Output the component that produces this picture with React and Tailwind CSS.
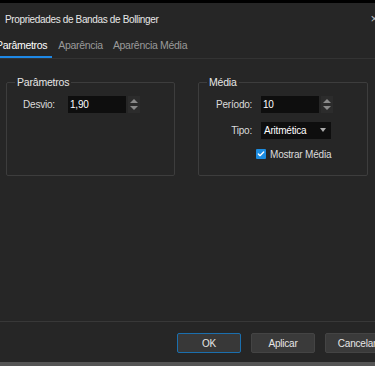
import { Check } from 'lucide-react'

function Spinner() {
  return (
    <div className="flex flex-col items-center justify-center gap-[3px] w-[12px] h-[17px] bg-[#2c2c2c]">
      <div className="w-0 h-0 border-l-[4px] border-r-[4px] border-b-[4px] border-l-transparent border-r-transparent border-b-[#8a8a8a]" />
      <div className="w-0 h-0 border-l-[4px] border-r-[4px] border-t-[4px] border-l-transparent border-r-transparent border-t-[#8a8a8a]" />
    </div>
  )
}

function GroupBox({ title, className, children }) {
  return (
    <fieldset className={`border border-[#3d3d3d] rounded-[2px] px-0 pb-0 ${className}`}>
      <legend className="ml-[8px] px-[2px] text-[#e6e6e6] text-[10.5px]">{title}</legend>
      {children}
    </fieldset>
  )
}

export default function App() {
  return (
    <div
      className="w-[375px] h-[366px] bg-[#262626] text-[#dcdcdc] text-[10px] tracking-[-0.2px] flex flex-col overflow-hidden"
      style={{ fontFamily: '"Liberation Sans", Arial, sans-serif' }}
    >
      <div className="h-[3px] bg-black shrink-0" />
      {/* title bar */}
      <div className="h-[32px] flex items-center justify-between pl-[5px] shrink-0">
        <span className="text-[#e8e8e8] tracking-[-0.35px]">Propriedades de Bandas de Bollinger</span>
        <span className="text-[#bdbdbd] text-[13px] -mr-[3px]">×</span>
      </div>

      {/* tabs */}
      <div className="h-[24px] flex items-end border-b border-[#333] shrink-0 text-[10.5px] tracking-[-0.3px]">
        <div className="-ml-[5px] pl-[1px] pr-[5px] pb-[2px] border-b-2 border-[#1e88e5] text-white">Parâmetros</div>
        <div className="ml-[6px] pb-[4px] text-[#9a9a9a]">Aparência</div>
        <div className="ml-[10px] pb-[4px] text-[#9a9a9a]">Aparência Média</div>
      </div>

      {/* content */}
      <div className="flex-1 flex gap-[23px] px-[6px] pt-[16px]">
        <GroupBox title="Parâmetros" className="w-[169px] h-[101px]">
          <div className="flex items-center mt-[5px] ml-[16px]">
            <span className="w-[45px]">Desvio:</span>
            <div className="w-[58px] h-[17px] bg-[#0e0e0e] text-white pl-[2px] leading-[17px]">1,90</div>
            <div className="ml-[2px]"><Spinner /></div>
          </div>
        </GroupBox>
        <GroupBox title="Média" className="w-[170px] h-[101px]">
          <div className="flex flex-col items-start ml-[17px] mt-[5px] gap-[9px]">
            <div className="flex items-center">
              <span className="w-[45px]">Período:</span>
              <div className="w-[58px] h-[17px] bg-[#0e0e0e] text-white pl-[2px] leading-[17px]">10</div>
              <div className="ml-[2px]"><Spinner /></div>
            </div>
            <div className="flex items-center">
              <span className="w-[45px] text-right pr-[9px]">Tipo:</span>
              <div className="w-[70px] h-[17px] bg-[#0e0e0e] text-white pl-[3px] flex items-center justify-between pr-[5px]">
                <span>Aritmética</span>
                <div className="w-0 h-0 border-l-[3.5px] border-r-[3.5px] border-t-[4px] border-l-transparent border-r-transparent border-t-[#aaa]" />
              </div>
            </div>
            <div className="flex items-center ml-[40px] gap-[4px] -mt-[1px]">
              <div className="w-[10px] h-[10px] bg-[#1c8ce0] rounded-[1px] flex items-center justify-center">
                <Check size={8} strokeWidth={4} color="white" />
              </div>
              <span>Mostrar Média</span>
            </div>
          </div>
        </GroupBox>
      </div>

      {/* footer */}
      <div className="border-t border-[#383838] h-[41px] flex items-start pt-[11px] pl-[177px] gap-[10px] shrink-0">
        <button className="w-[64px] h-[20px] bg-[#383838] border border-[#1b6fae] rounded-[2px] text-[#e6e6e6] shrink-0">OK</button>
        <button className="w-[64px] h-[20px] bg-[#3a3a3a] border border-[#444] rounded-[2px] text-[#e6e6e6] shrink-0">Aplicar</button>
        <button className="w-[64px] h-[20px] bg-[#3a3a3a] border border-[#444] rounded-[2px] text-[#e6e6e6] shrink-0">Cancelar</button>
      </div>
      <div className="h-[4px] bg-[#555] shrink-0" />
    </div>
  )
}
